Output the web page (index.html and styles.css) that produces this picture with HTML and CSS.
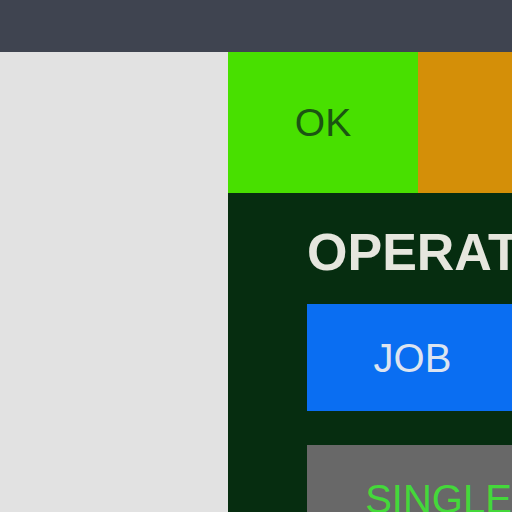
FILE: index.html
```html
<!DOCTYPE html>
<html>
<head>
<meta charset="utf-8">
<link rel="stylesheet" href="styles.css">
</head>
<body>
<div class="app">
  <div class="topbar"></div>
  <div class="main">
    <div class="sidebar"></div>
    <div class="content">
      <div class="status-row">
        <div class="status status-ok">OK</div>
        <div class="status status-warn"></div>
      </div>
      <div class="panel">
        <div class="panel-title">OPERATION</div>
        <div class="btn btn-job">JOB</div>
        <div class="btn btn-single">SINGLE</div>
      </div>
    </div>
  </div>
</div>
</body>
</html>
```
FILE: styles.css
```css
html, body {
  margin: 0;
  padding: 0;
  width: 512px;
  height: 512px;
  overflow: hidden;
  font-family: "Liberation Sans", Arial, sans-serif;
}
.app {
  display: flex;
  flex-direction: column;
  width: 512px;
  height: 512px;
}
.topbar {
  height: 52px;
  flex-shrink: 0;
  background: #3f4450;
}
.main {
  flex: 1;
  display: flex;
  min-height: 0;
}
.sidebar {
  width: 228px;
  flex-shrink: 0;
  background: #e2e2e2;
}
.content {
  flex: 1;
  display: flex;
  flex-direction: column;
  min-width: 0;
  overflow: hidden;
}
.status-row {
  display: flex;
  height: 141px;
  flex-shrink: 0;
}
.status {
  display: flex;
  align-items: center;
  justify-content: center;
  font-size: 39px;
  line-height: 39px;
}
.status-ok {
  width: 190px;
  flex-shrink: 0;
  background: #48e000;
  color: #1b5512;
}
.status-warn {
  flex: 1;
  background: #d48f08;
}
.panel {
  flex: 1;
  background: #062d10;
  padding: 33px 0 0 79px;
  display: flex;
  flex-direction: column;
  align-items: flex-start;
  overflow: hidden;
}
.panel-title {
  font-size: 52px;
  line-height: 52px;
  font-weight: bold;
  color: #e6e6de;
  white-space: nowrap;
  margin-bottom: 26px;
}
.btn {
  height: 107px;
  flex-shrink: 0;
  display: flex;
  align-items: center;
  justify-content: center;
  font-size: 40px;
  line-height: 40px;
  white-space: nowrap;
  margin-bottom: 34px;
}
.btn-job {
  width: 211px;
  background: #0a6ef2;
  color: #dde4f0;
}
.btn-single {
  width: 263px;
  background: #686868;
  color: #44d83a;
}
```
